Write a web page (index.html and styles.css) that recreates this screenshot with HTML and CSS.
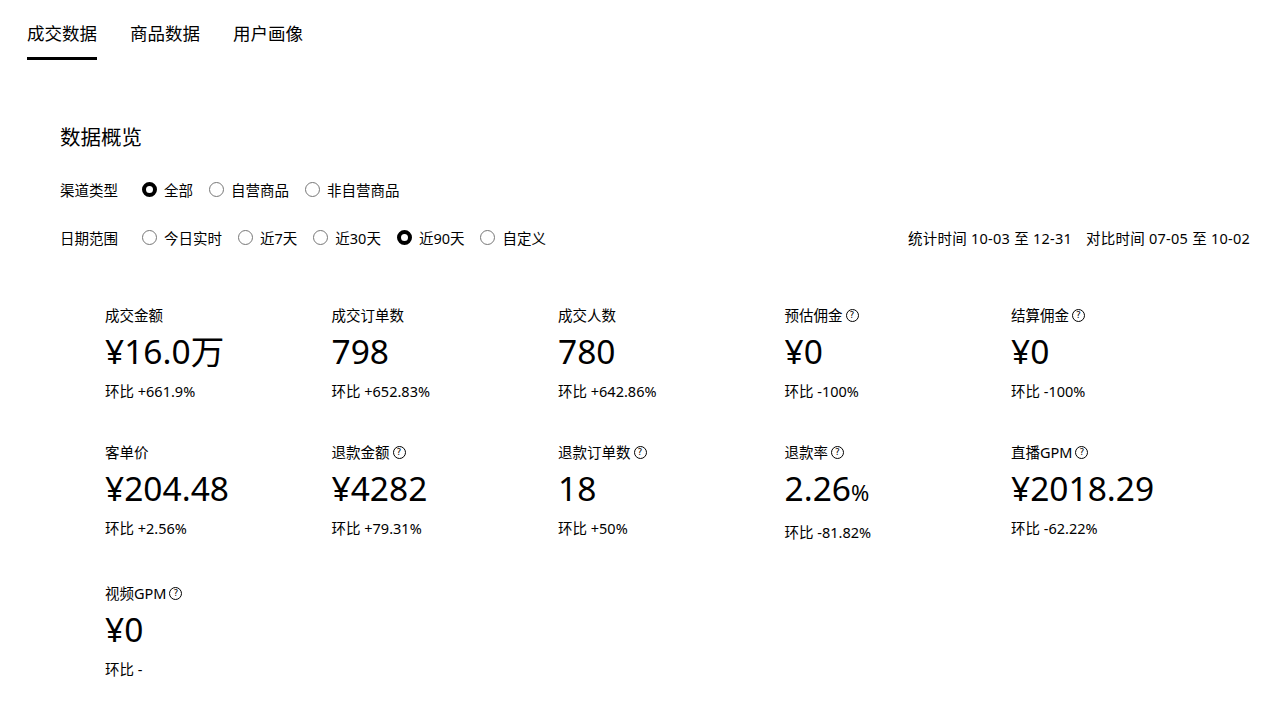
FILE: index.html
```html
<!DOCTYPE html>
<html lang="zh">
<head>
<meta charset="utf-8">
<title>成交数据</title>
<link rel="stylesheet" href="styles.css">
</head>
<body>
<div class="page">
  <nav class="tabs">
    <div class="tab active">成交数据</div>
    <div class="tab">商品数据</div>
    <div class="tab">用户画像</div>
  </nav>
  <section class="overview">
    <h2 class="title">数据概览</h2>
    <div class="filter-row">
      <div class="filter">
        <span class="filter-label">渠道类型</span>
        <label class="radio checked"><i></i>全部</label>
        <label class="radio"><i></i>自营商品</label>
        <label class="radio"><i></i>非自营商品</label>
      </div>
    </div>
    <div class="filter-row date-row">
      <div class="filter">
        <span class="filter-label">日期范围</span>
        <label class="radio"><i></i>今日实时</label>
        <label class="radio"><i></i>近7天</label>
        <label class="radio"><i></i>近30天</label>
        <label class="radio checked"><i></i>近90天</label>
        <label class="radio"><i></i>自定义</label>
      </div>
      <div class="period">统计时间 10-03 至 12-31<span class="sp"></span>对比时间 07-05 至 10-02</div>
    </div>
    <div class="metrics">
      <div class="metric"><div class="m-label">成交金额</div><div class="m-value">¥16.0万</div><div class="m-change">环比 +661.9%</div></div>
      <div class="metric"><div class="m-label">成交订单数</div><div class="m-value">798</div><div class="m-change">环比 +652.83%</div></div>
      <div class="metric"><div class="m-label">成交人数</div><div class="m-value">780</div><div class="m-change">环比 +642.86%</div></div>
      <div class="metric"><div class="m-label">预估佣金<span class="q">?</span></div><div class="m-value">¥0</div><div class="m-change">环比 -100%</div></div>
      <div class="metric"><div class="m-label">结算佣金<span class="q">?</span></div><div class="m-value">¥0</div><div class="m-change">环比 -100%</div></div>
      <div class="metric"><div class="m-label">客单价</div><div class="m-value">¥204.48</div><div class="m-change">环比 +2.56%</div></div>
      <div class="metric"><div class="m-label">退款金额<span class="q">?</span></div><div class="m-value">¥4282</div><div class="m-change">环比 +79.31%</div></div>
      <div class="metric"><div class="m-label">退款订单数<span class="q">?</span></div><div class="m-value">18</div><div class="m-change">环比 +50%</div></div>
      <div class="metric"><div class="m-label">退款率<span class="q">?</span></div><div class="m-value">2.26<span class="pct">%</span></div><div class="m-change">环比 -81.82%</div></div>
      <div class="metric"><div class="m-label">直播GPM<span class="q">?</span></div><div class="m-value">¥2018.29</div><div class="m-change">环比 -62.22%</div></div>
      <div class="metric"><div class="m-label">视频GPM<span class="q">?</span></div><div class="m-value">¥0</div><div class="m-change">环比 -</div></div>
    </div>
  </section>
</div>
</body>
</html>
```

FILE: styles.css
```css
* { box-sizing: border-box; }
html, body { margin: 0; padding: 0; background: #fff; }
body {
  font-family: "Noto Sans CJK SC", "Noto Sans", sans-serif;
  color: #000;
  width: 1280px;
  height: 712px;
  overflow: hidden;
}
.page { padding: 0 30px 0 27px; }

.tabs { display: flex; gap: 33px; }
.tab {
  font-size: 17.5px;
  line-height: 22px;
  padding: 22px 0 13px;
  border-bottom: 3px solid transparent;
}
.tab.active { border-bottom-color: #000; }

.overview { padding-left: 33px; }
.title {
  margin: 62px 0 0;
  font-size: 20.5px;
  line-height: 28px;
  font-weight: 400;
}

.filter-row {
  display: flex;
  align-items: center;
  justify-content: space-between;
  height: 22px;
  margin-top: 28px;
}
.date-row { margin-top: 26px; }
.filter {
  display: flex;
  align-items: center;
  font-size: 14.5px;
  font-family: "Noto Sans", "Noto Sans CJK SC", sans-serif;
}
.filter-label { margin-right: 24px; }
.radio {
  display: flex;
  align-items: center;
  gap: 7px;
  margin-right: 16px;
}
.radio i {
  display: block;
  width: 15px;
  height: 15px;
  border: 1px solid #777;
  border-radius: 50%;
}
.radio.checked i { border: 4px solid #000; }
.period {
  font-size: 14.5px;
  letter-spacing: 0.25px;
  font-family: "Noto Sans", "Noto Sans CJK SC", sans-serif;
}
.period .sp { display: inline-block; width: 14px; }

.metrics {
  display: grid;
  grid-template-columns: repeat(5, 226.5px);
  row-gap: 41px;
  margin-top: 57px;
  padding-left: 45px;
  align-items: start;
}
.metric { display: flex; flex-direction: column; }
.m-label {
  display: flex;
  align-items: center;
  font-size: 14.5px;
  line-height: 20px;
  font-family: "Noto Sans", "Noto Sans CJK SC", sans-serif;
}
.q {
  display: inline-flex;
  align-items: center;
  justify-content: center;
  width: 13px;
  height: 13px;
  margin-left: 3px;
  border: 1px solid #000;
  border-radius: 50%;
  font-size: 9px;
  line-height: 1;
  font-family: "DejaVu Sans", sans-serif;
}
.m-value {
  margin-top: 6px;
  font-size: 33.5px;
  line-height: 40px;
  font-family: "Noto Sans", "Noto Sans CJK SC", sans-serif;
}
.pct { font-size: 22px; }
.m-change {
  margin-top: 10px;
  font-size: 14.5px;
  line-height: 20px;
  font-family: "Noto Sans", "Noto Sans CJK SC", sans-serif;
}
```
